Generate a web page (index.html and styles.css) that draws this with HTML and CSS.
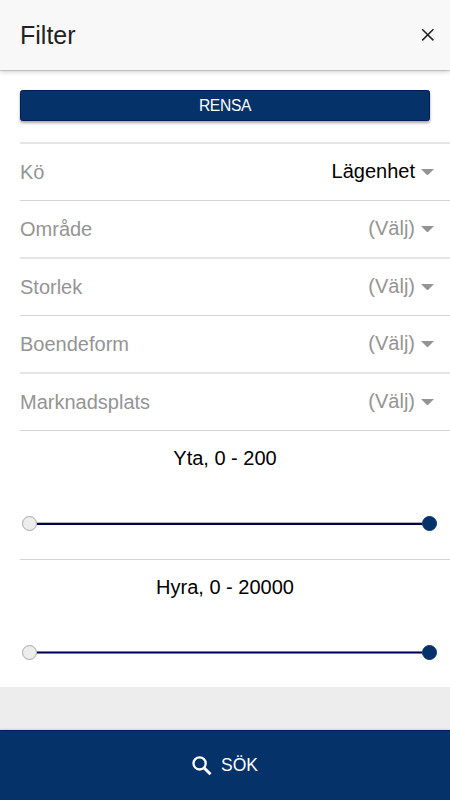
FILE: index.html
```html
<!DOCTYPE html>
<html lang="sv">
<head>
<meta charset="utf-8">
<title>Filter</title>
<link rel="stylesheet" href="styles.css">
</head>
<body>
<header class="header">
  <h1 class="title">Filter</h1>
  <button class="close" aria-label="Stäng"><svg width="14" height="14" viewBox="0 0 14 14"><path d="M1.2 1.2 12.4 12.4M12.4 1.2 1.2 12.4" fill="none" stroke="#222" stroke-width="1.5"/></svg></button>
</header>
<main class="content">
  <button class="clear">RENSA</button>
  <div class="list">
    <div class="row soft"><span class="label">Kö</span><span class="value chosen">Lägenhet</span><i class="arrow"></i></div>
    <div class="row"><span class="label">Område</span><span class="value">(Välj)</span><i class="arrow"></i></div>
    <div class="row soft"><span class="label">Storlek</span><span class="value">(Välj)</span><i class="arrow"></i></div>
    <div class="row"><span class="label">Boendeform</span><span class="value">(Välj)</span><i class="arrow"></i></div>
    <div class="row soft"><span class="label">Marknadsplats</span><span class="value">(Välj)</span><i class="arrow"></i></div>
    <section class="range">
      <div class="caption">Yta, 0 - 200</div>
      <div class="slider"><i class="knob"></i><i class="track wide"></i><i class="knob max"></i></div>
    </section>
    <section class="range">
      <div class="caption">Hyra, 0 - 20000</div>
      <div class="slider"><i class="knob"></i><i class="track narrow"></i><i class="knob max"></i></div>
    </section>
  </div>
</main>
<button class="search"><svg width="20" height="20" viewBox="0 0 20 20"><circle cx="7.6" cy="7.4" r="6.1" fill="none" stroke="#fff" stroke-width="2.3"/><path d="M11.8 11.6 18.5 18.3" fill="none" stroke="#fff" stroke-width="2.9"/></svg><span>SÖK</span></button>
</body>
</html>
```
FILE: styles.css
```css
* { box-sizing: border-box; }
body {
  margin: 0;
  height: 800px;
  display: flex;
  flex-direction: column;
  overflow: hidden;
  background: #ededed;
  font: 20px/24px "Liberation Sans", Arial, sans-serif;
  color: #000;
}
button { border: 0; padding: 0; margin: 0; font-family: inherit; }
.header {
  height: 70px;
  flex: none;
  display: flex;
  align-items: center;
  justify-content: space-between;
  padding: 0 15px 0 20px;
  background: #f8f8f8;
  box-shadow: 0 1px 1px rgba(0,0,0,.14), 0 2px 5px rgba(0,0,0,.17);
  z-index: 1;
}
.title { margin: 0; font-size: 25px; line-height: 30px; font-weight: 400; color: #222; }
.close { display: flex; background: none; }
.content {
  height: 617px;
  flex: none;
  padding-top: 20px;
  background: #fff;
}
.clear {
  display: block;
  width: 410px;
  height: 31px;
  margin: 0 20px 21px;
  border: 1px solid #001b58;
  border-radius: 2.5px;
  background: #053269;
  color: #fff;
  font-size: 15.6px;
  letter-spacing: -.3px;
  line-height: 29px;
  box-shadow: 0 2px 3px rgba(0,0,0,.35);
}
.list { margin-left: 20px; }
.row {
  height: 57px;
  display: flex;
  align-items: center;
  padding-right: 16px;
  border-top: 1px solid #d3d3d3;
}
.row.soft { height: 58px; border-top: 2px solid #e5e5e5; }
.label { flex: 1; color: #949494; }
.value { color: #949494; margin-right: 6px; position: relative; top: -1px; }
.value.chosen { color: #000; }
.arrow {
  width: 13px;
  flex: none;
  border: solid transparent;
  border-width: 6px 6.5px 0;
  border-top-color: #949494;
}
.range {
  height: 129px;
  margin-right: 20px;
  padding-top: 16px;
  position: relative;
}
.range::before {
  content: "";
  position: absolute;
  top: 0;
  left: 0;
  right: -20px;
  height: 1px;
  background: #d3d3d3;
}
.caption { text-align: center; }
.slider { display: flex; align-items: center; margin: 46px -7.4px 0 2.4px; height: 15px; }
.knob {
  width: 15px;
  height: 15px;
  flex: none;
  border: 1px solid #a8a8a8;
  border-radius: 50%;
  background: #ededed;
}
.knob.max { background: #053269; border-color: #053269; }
.track { flex: 1; height: 3px; background: #000048; border-top: 1px solid #b5b5bd; }
.track.narrow { border-top-color: #777795; border-bottom: 1px solid #777795; background: #00005c; }
.search {
  height: 70px;
  flex: none;
  margin-top: 43px;
  display: flex;
  align-items: center;
  justify-content: center;
  gap: 9px;
  background: #053269;
  border-top: 1px solid #001b58;
  color: #fff;
  font-size: 17.5px;
  box-shadow: 0 -1px 2px rgba(0,0,0,.1);
}
```
